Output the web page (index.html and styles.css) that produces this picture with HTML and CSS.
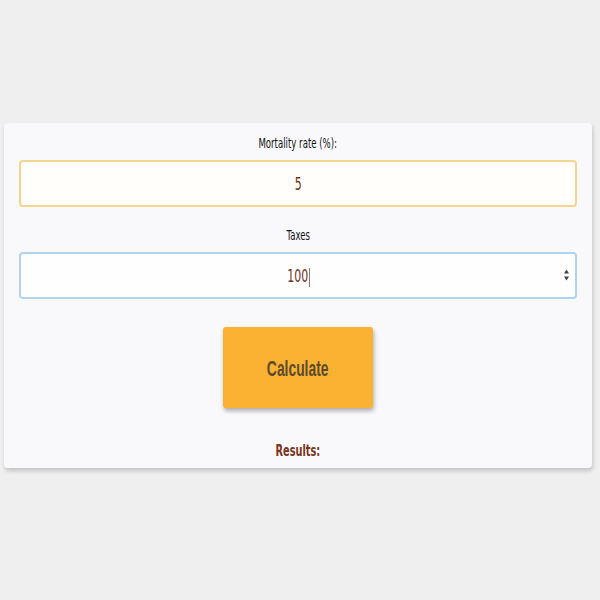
FILE: index.html
```html
<!DOCTYPE html>
<html lang="en">
<head>
  <meta charset="UTF-8" />
  <title>Calculator</title>
  <link rel="stylesheet" href="styles.css">
</head>
<body>
  <main class="card">
    <div class="field">
      <label class="field-label" for="mortality"><span>Mortality rate (%):</span></label>
      <div class="input-box input-warm" id="mortality"><span class="value">5</span></div>
    </div>

    <div class="field">
      <label class="field-label" for="taxes"><span>Taxes</span></label>
      <div class="input-box input-focus" id="taxes">
        <span class="value">100<span class="caret"></span></span>
        <span class="spinner">
          <svg width="7" height="14" viewBox="0 0 7 14">
            <path d="M3.5 1.5 L6 5.5 L1 5.5 Z" fill="#444" />
            <path d="M3.5 12.5 L6 8.5 L1 8.5 Z" fill="#444" />
          </svg>
        </span>
      </div>
    </div>

    <div class="actions">
      <button class="calc-button"><span>Calculate</span></button>
    </div>

    <div class="results"><span>Results:</span></div>
  </main>
</body>
</html>
```

FILE: styles.css
```css
body {
  margin: 0;
  padding: 123px 8px 0 4px;
  background-color: #efefef;
  font-family: "Comic Sans MS", "DejaVu Sans Condensed", "DejaVu Sans", sans-serif;
  height: 600px;
  box-sizing: border-box;
}

.card {
  background-color: #f9f9fb;
  padding: 11px 15px 8px 15px;
  border-radius: 4px;
  box-shadow: 1px 3px 4px rgba(0, 0, 0, 0.18);
  height: 345px;
  box-sizing: border-box;
}

.field {
  margin-bottom: 19px;
}

.field-label {
  display: block;
  text-align: center;
  font-size: 14px;
  color: #111;
  height: 26px;
  line-height: 18px;
}

.field-label span,
.results span,
.calc-button span,
.value {
  display: inline-block;
  transform: scaleX(0.68);
}

.calc-button span {
  transform: scaleX(0.66) scaleY(1.08);
}

.input-box {
  position: relative;
  height: 47px;
  box-sizing: border-box;
  border-radius: 4px;
  text-align: center;
  line-height: 44px;
  font-size: 18px;
  color: #6e3318;
}

.input-warm {
  background-color: #fffefa;
  border: 2px solid #f4d58e;
}

.input-focus {
  background-color: #fefeff;
  border: 2px solid #b2d3ef;
}

.caret {
  display: inline-block;
  width: 1px;
  height: 19px;
  background-color: #6e3318;
  vertical-align: middle;
  margin-left: 1px;
}

.spinner {
  position: absolute;
  right: 5px;
  top: 14px;
  line-height: 0;
}

.actions {
  display: flex;
  justify-content: center;
  padding-top: 9px;
}

.calc-button {
  width: 150px;
  height: 81px;
  background-color: #fbb232;
  border: none;
  border-radius: 3px;
  box-shadow: 1px 3px 4px rgba(0, 0, 0, 0.3);
  font-family: "Liberation Sans", Arial, sans-serif;
  font-weight: bold;
  font-size: 21px;
  color: #5b4a2c;
  cursor: pointer;
}

.results {
  text-align: center;
  margin-top: 33px;
  font-size: 16px;
  font-weight: bold;
  color: #7a3419;
}
```
